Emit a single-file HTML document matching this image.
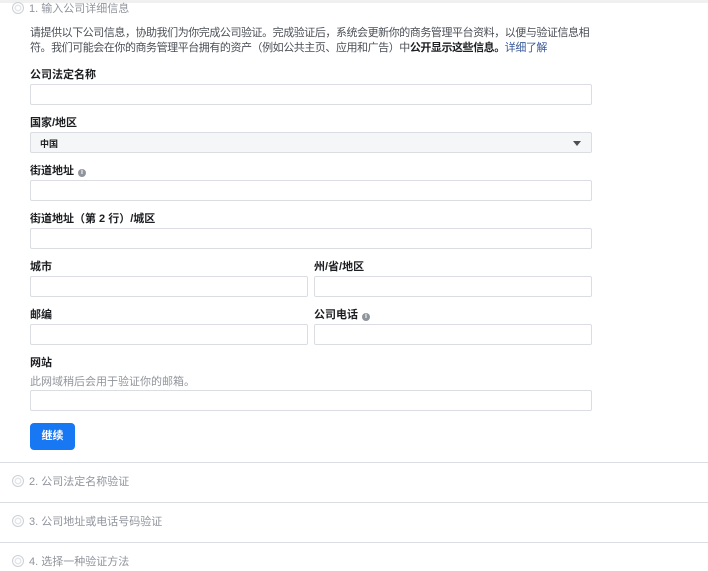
<!DOCTYPE html><html><head><meta charset="utf-8"><style>
body{margin:0;width:708px;height:571px;overflow:hidden;background:#fff;font-family:"Liberation Sans","Noto Sans CJK SC",sans-serif;font-size:11px;color:#1c1e21;position:relative}
.a{position:absolute}
.lbl{position:absolute;left:30px;font-weight:bold;font-size:11px;color:#1c1e21}
.in{position:absolute;border:1px solid #dadde1;background:#fff;box-sizing:border-box;height:21px;border-radius:2px}
.step{position:absolute;left:12px;color:#90949c;font-size:11px;line-height:14px}
.step i{display:inline-block;width:10px;height:10px;border:1.5px solid #ccd0d5;border-radius:50%;vertical-align:-2px;margin-right:5px;box-shadow:inset 0 0 0 1.5px #fff,inset 0 0 0 3px #e4e6ea}
.hr{position:absolute;left:0;width:708px;height:1px;background:#dadde1}
.info{display:inline-block;width:8px;height:8px;border-radius:50%;background:#90949c;color:#fff;font-size:7px;line-height:8px;text-align:center;vertical-align:0;margin-left:4px}
</style></head><body>
<div class="a" style="left:0;top:0;width:708px;height:3px;background:#f0f0f0"></div>
<div class="step" style="top:2px"><i></i>1. 输入公司详细信息</div>
<div class="a" style="left:30px;top:26px;white-space:nowrap;line-height:15px;color:#4b4f56;letter-spacing:-0.45px">请提供以下公司信息，协助我们为你完成公司验证。完成验证后，系统会更新你的商务管理平台资料，以便与验证信息相<br>符。我们可能会在你的商务管理平台拥有的资产（例如公共主页、应用和广告）中<b style="color:#1c1e21">公开显示这些信息。</b><span style="color:#385898">详细了解</span></div>
<div class="lbl" style="top:66px">公司法定名称</div>
<div class="in" style="left:30px;top:84px;width:562px"></div>
<div class="lbl" style="top:114px">国家/地区</div>
<div class="in" style="left:30px;top:132px;width:562px;background:#f5f6f7;font-size:9px;font-weight:bold;padding:4px 0 0 9px">中国<span class="a" style="right:10px;top:8px;width:0;height:0;border-left:4px solid transparent;border-right:4px solid transparent;border-top:5px solid #4b4f56"></span></div>
<div class="lbl" style="top:162px">街道地址<span class="info">i</span></div>
<div class="in" style="left:30px;top:180px;width:562px"></div>
<div class="lbl" style="top:210px">街道地址（第 2 行）/城区</div>
<div class="in" style="left:30px;top:228px;width:562px"></div>
<div class="lbl" style="top:258px">城市</div>
<div class="lbl" style="top:258px;left:314px">州/省/地区</div>
<div class="in" style="left:30px;top:276px;width:278px"></div>
<div class="in" style="left:314px;top:276px;width:278px"></div>
<div class="lbl" style="top:306px">邮编</div>
<div class="lbl" style="top:306px;left:314px">公司电话<span class="info">i</span></div>
<div class="in" style="left:30px;top:324px;width:278px"></div>
<div class="in" style="left:314px;top:324px;width:278px"></div>
<div class="lbl" style="top:354px">网站</div>
<div class="a" style="left:30px;top:373px;color:#90949c">此网域稍后会用于验证你的邮箱。</div>
<div class="in" style="left:30px;top:390px;width:562px"></div>
<div class="a" style="left:30px;top:423px;width:45px;height:27px;background:#1877f2;border-radius:4px;color:#fff;font-weight:bold;text-align:center;line-height:27px">继续</div>
<div class="hr" style="top:462px"></div>
<div class="step" style="top:475px"><i></i>2. 公司法定名称验证</div>
<div class="hr" style="top:502px"></div>
<div class="step" style="top:515px"><i></i>3. 公司地址或电话号码验证</div>
<div class="hr" style="top:542px"></div>
<div class="step" style="top:555px"><i></i>4. 选择一种验证方法</div>
</body></html>
